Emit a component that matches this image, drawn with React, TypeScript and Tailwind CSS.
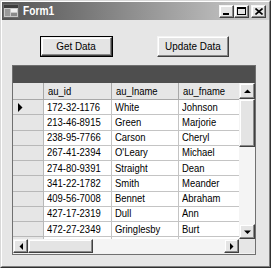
import React from "react";

const rows: [string, string, string][] = [
  ["172-32-1176", "White", "Johnson"],
  ["213-46-8915", "Green", "Marjorie"],
  ["238-95-7766", "Carson", "Cheryl"],
  ["267-41-2394", "O'Leary", "Michael"],
  ["274-80-9391", "Straight", "Dean"],
  ["341-22-1782", "Smith", "Meander"],
  ["409-56-7008", "Bennet", "Abraham"],
  ["427-17-2319", "Dull", "Ann"],
  ["472-27-2349", "Gringlesby", "Burt"],
  ["486-29-1786", "Locksley", "Charlene"],
];

const btn3d =
  "border border-t-[#f4f4f4] border-l-[#f4f4f4] border-r-[#404040] border-b-[#404040] shadow-[inset_-1px_-1px_#8a8a8a,inset_1px_1px_#ffffff] bg-[#e4e4e4]";

function Tri({ dir }: { dir: "up" | "down" | "left" | "right" }) {
  const pts = {
    up: "0,4 7,4 3.5,0.5",
    down: "0,0.5 7,0.5 3.5,4",
    left: "4,0 4,7 0.5,3.5",
    right: "0,0 0,7 3.5,3.5",
  }[dir];
  const vert = dir === "up" || dir === "down";
  return (
    <svg width={vert ? 7 : 4} height={vert ? 4 : 7} viewBox={vert ? "0 0 7 4" : "0 0 4 7"}>
      <polygon points={pts} fill="#000" />
    </svg>
  );
}

function T({ children }: { children: React.ReactNode }) {
  return <span className="inline-block whitespace-nowrap scale-x-[0.86] origin-left">{children}</span>;
}

export default function App() {
  return (
    <div
      className="w-[272px] h-[272px] bg-white text-[11px] text-black"
      style={{ fontFamily: '"Liberation Sans", Arial, sans-serif' }}
    >
      <div className="w-[271px] h-[268px] border border-t-[#d8d8d8] border-l-[#d8d8d8] border-r-[#303030] border-b-[#303030]">
        <div className="w-full h-full flex flex-col bg-[#e6e6e6] border border-t-white border-l-white border-r-[#808080] border-b-[#808080]">
          {/* title bar */}
          <div className="h-[18px] flex items-center bg-[linear-gradient(to_right,#555555,#777777_30%,#d0d0d0)] pl-[1px] pr-[3px]">
            <svg width="16" height="16" viewBox="0 0 16 16" className="shrink-0">
              <rect x="0.5" y="1.5" width="15" height="13" fill="#c8c8c8" stroke="#6a6a6a" />
              <rect x="1" y="2" width="14" height="3" fill="#3c3c3c" />
              <rect x="2" y="6" width="5" height="7" fill="#9a9a9a" />
              <rect x="8" y="6" width="6" height="3" fill="#f0f0f0" />
              <rect x="8" y="10" width="6" height="3" fill="#8a8a8a" />
            </svg>
            <span className="ml-[4px] text-white font-bold text-[12px] leading-none inline-block scale-x-[0.85] origin-left">
              Form1
            </span>
            <div className="ml-auto flex items-center">
              <div className={`w-[15px] h-[13px] ${btn3d} flex items-end justify-center pb-[2px]`}>
                <div className="w-[6px] h-[2px] bg-black mr-[2px]" />
              </div>
              <div className={`w-[15px] h-[13px] ${btn3d} flex items-center justify-center`}>
                <div className="w-[9px] h-[8px] border border-black border-t-2" />
              </div>
              <div className={`ml-[2px] w-[15px] h-[13px] ${btn3d} flex items-center justify-center`}>
                <svg width="8" height="7" viewBox="0 0 8 7">
                  <path d="M0.5 0.5 L7.5 6.5 M7.5 0.5 L0.5 6.5" stroke="#000" strokeWidth="1.6" />
                </svg>
              </div>
            </div>
          </div>

          {/* buttons */}
          <div className="flex mt-[16px] pl-[38px]">
            <div className="w-[73px] h-[21px] border border-black">
              <div className={`w-full h-full ${btn3d} flex items-center justify-center`}>
                <span className="inline-block scale-x-[0.9]">Get Data</span>
              </div>
            </div>
            <div className={`ml-[44px] w-[72px] h-[21px] ${btn3d} flex items-center justify-center`}>
              <span className="inline-block whitespace-nowrap scale-x-[0.9]">Update Data</span>
            </div>
          </div>

          {/* grid */}
          <div className="ml-[10px] mt-[8px] w-[244px] h-[190px] border border-[#707070] flex flex-col bg-[#f2f2f2]">
            <div className="h-[17px] bg-[#4e4e4e] shrink-0" />
            <div className="h-[156px] flex shrink-0">
              <div className="w-[226px] overflow-hidden bg-[#e6e6e6]">
                <div className="w-[300px]">
                  <div className="h-[17px] flex border-b border-[#a8a8a8]">
                    <div className="w-[31px] shrink-0 border-r border-[#a8a8a8]" />
                    <div className="w-[68px] shrink-0 border-r border-[#a8a8a8] pl-[4px] flex items-center">
                      <T>au_id</T>
                    </div>
                    <div className="w-[67px] shrink-0 border-r border-[#a8a8a8] pl-[4px] flex items-center">
                      <T>au_lname</T>
                    </div>
                    <div className="w-[80px] shrink-0 border-r border-[#a8a8a8] pl-[4px] flex items-center">
                      <T>au_fname</T>
                    </div>
                  </div>
                  {rows.map((r, i) => (
                    <div key={i} className="h-[15.25px] flex">
                      <div className="w-[31px] shrink-0 border-r border-b border-[#b8b8b8] flex items-center pl-[5px]">
                        {i === 0 && (
                          <svg width="5" height="9" viewBox="0 0 5 9">
                            <polygon points="0,0 0,9 4.5,4.5" fill="#000" />
                          </svg>
                        )}
                      </div>
                      <div className="w-[68px] shrink-0 bg-white border-r border-b border-[#c4c4c4] pl-[3px] flex items-center leading-none">
                        <T>{r[0]}</T>
                      </div>
                      <div className="w-[67px] shrink-0 bg-white border-r border-b border-[#c4c4c4] pl-[3px] flex items-center leading-none">
                        <T>{r[1]}</T>
                      </div>
                      <div className="w-[80px] shrink-0 bg-white border-r border-b border-[#c4c4c4] pl-[3px] flex items-center leading-none">
                        <T>{r[2]}</T>
                      </div>
                    </div>
                  ))}
                </div>
              </div>
              {/* vertical scrollbar */}
              <div className="w-[16px] flex flex-col bg-[#f4f4f4]">
                <div className={`h-[16px] ${btn3d} flex items-center justify-center`}>
                  <Tri dir="up" />
                </div>
                <div className={`h-[48px] ${btn3d}`} />
                <div className="flex-1" />
                <div className={`h-[15px] ${btn3d} flex items-center justify-center`}>
                  <Tri dir="down" />
                </div>
              </div>
            </div>
            {/* horizontal scrollbar */}
            <div className="h-[14px] flex shrink-0">
              <div className="w-[226px] flex bg-[#f4f4f4]">
                <div className={`w-[15px] ${btn3d} flex items-center justify-center`}>
                  <Tri dir="left" />
                </div>
                <div className={`w-[65px] ${btn3d}`} />
                <div className="flex-1" />
                <div className={`w-[15px] ${btn3d} flex items-center justify-center`}>
                  <Tri dir="right" />
                </div>
              </div>
              <div className="w-[16px] bg-[#e6e6e6]" />
            </div>
          </div>
        </div>
      </div>
    </div>
  );
}
